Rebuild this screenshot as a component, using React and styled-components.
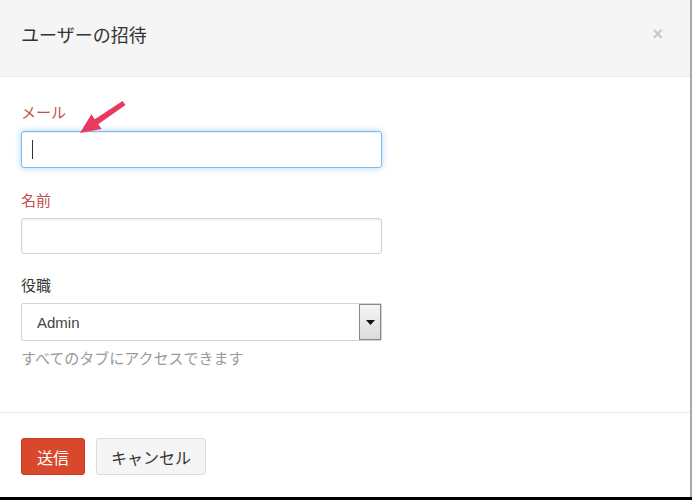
import styled, { createGlobalStyle } from 'styled-components'

const GlobalStyle = createGlobalStyle`
  html, body {
    margin: 0;
    padding: 0;
    background: #000000;
  }
  body {
    font-family: "Noto Sans CJK JP", "Liberation Sans", sans-serif;
  }
`

const Modal = styled.div`
  position: relative;
  width: 690px;
  height: 497px;
  background: #ffffff;
  border-right: 2px solid #a8a8a8;
  display: flex;
  flex-direction: column;
`

const Header = styled.div`
  flex-shrink: 0;
  height: 77px;
  box-sizing: border-box;
  background: #f5f5f5;
  border-bottom: 1px solid #e8e8e8;
  display: flex;
  align-items: center;
  justify-content: space-between;
  padding: 0 27px 8px 21px;
`

const Title = styled.h3`
  margin: 0;
  font-size: 18px;
  font-weight: 400;
  color: #333333;
`

const Close = styled.span`
  font-family: "Liberation Sans", sans-serif;
  font-size: 18px;
  font-weight: 700;
  color: #c8c8c8;
  line-height: 1;
`

const Body = styled.div`
  flex-shrink: 0;
  padding: 25px 21px 0 21px;
  height: 336px;
  box-sizing: border-box;
  border-bottom: 1px solid #e8e8e8;
`

const Field = styled.div`
  display: flex;
  flex-direction: column;
  margin-bottom: ${p => p.$gap || 22}px;
`

const Label = styled.label`
  font-size: 15px;
  line-height: 20px;
  color: ${p => (p.$error ? '#c0504d' : '#333333')};
  margin-bottom: ${p => p.$gap || 9}px;
`

const Input = styled.input`
  width: 361px;
  height: ${p => p.$h || 37}px;
  box-sizing: border-box;
  border-radius: 3px;
  border: 1px solid ${p => (p.$focus ? '#7fbbea' : '#d4d4d4')};
  box-shadow: ${p =>
    p.$focus
      ? 'inset 0 1px 1px rgba(0,0,0,0.06), 0 0 6px rgba(102,175,233,0.55)'
      : 'inset 0 1px 2px rgba(0,0,0,0.08)'};
  padding: 0 10px;
  font-size: 15px;
  outline: none;
  background: #ffffff;
`

const Caret = styled.span`
  position: absolute;
  left: 11px;
  top: 9px;
  width: 1px;
  height: 19px;
  background: #333333;
`

const InputWrap = styled.div`
  position: relative;
  width: 361px;
`

const Select = styled.div`
  width: 361px;
  height: 38px;
  box-sizing: border-box;
  border: 1px solid #d4d4d4;
  border-radius: 2px;
  display: flex;
  align-items: center;
  justify-content: space-between;
  background: #ffffff;
`

const SelectText = styled.span`
  font-family: "Liberation Sans", sans-serif;
  font-size: 15px;
  color: #444444;
  padding-left: 15px;
`

const SelectButton = styled.span`
  width: 22px;
  height: 36px;
  box-sizing: border-box;
  border: 1px solid #888888;
  background: linear-gradient(#f4f4f4, #dcdcdc);
  display: flex;
  align-items: center;
  justify-content: center;
`

const Help = styled.div`
  margin-top: 7px;
  font-size: 15px;
  line-height: 20px;
  color: #9a9a9a;
`

const Footer = styled.div`
  flex: 1;
  padding: 25px 21px 0 21px;
  display: flex;
  align-items: flex-start;
  gap: 11px;
`

const Button = styled.button`
  height: 37px;
  box-sizing: border-box;
  padding: 0 ${p => (p.$primary ? 15 : 14)}px;
  border-radius: 3px;
  font-family: "Noto Sans CJK JP", sans-serif;
  font-size: 16px;
  border: 1px solid ${p => (p.$primary ? '#c83d24' : '#dcdcdc')};
  background: ${p => (p.$primary ? '#d9472c' : '#f5f5f5')};
  color: ${p => (p.$primary ? '#ffffff' : '#333333')};
`

const Arrow = styled.svg`
  position: absolute;
  left: 76px;
  top: 98px;
`

export default function App() {
  return (
    <>
      <GlobalStyle />
      <Modal>
        <Header>
          <Title>ユーザーの招待</Title>
          <Close>×</Close>
        </Header>
        <Body>
          <Field>
            <Label $error>メール</Label>
            <InputWrap>
              <Input $focus />
              <Caret />
            </InputWrap>
          </Field>
          <Field $gap={21}>
            <Label $error $gap={8}>名前</Label>
            <Input $h={36} />
          </Field>
          <Field $gap={0}>
            <Label $gap={8}>役職</Label>
            <Select>
              <SelectText>Admin</SelectText>
              <SelectButton>
                <svg width="9" height="5" viewBox="0 0 9 5">
                  <path d="M0 0 L9 0 L4.5 5 Z" fill="#111" />
                </svg>
              </SelectButton>
            </Select>
            <Help>すべてのタブにアクセスできます</Help>
          </Field>
        </Body>
        <Footer>
          <Button $primary>送信</Button>
          <Button>キャンセル</Button>
        </Footer>
        <Arrow width="52" height="42" viewBox="0 0 52 42">
          <path
            d="M4 35 L15.4 16.3 L18.8 21.2 L46.5 3 L49.5 7 L22.2 26.2 L25.6 31.1 Z"
            fill="#e83a5c"
          />
        </Arrow>
      </Modal>
    </>
  )
}
